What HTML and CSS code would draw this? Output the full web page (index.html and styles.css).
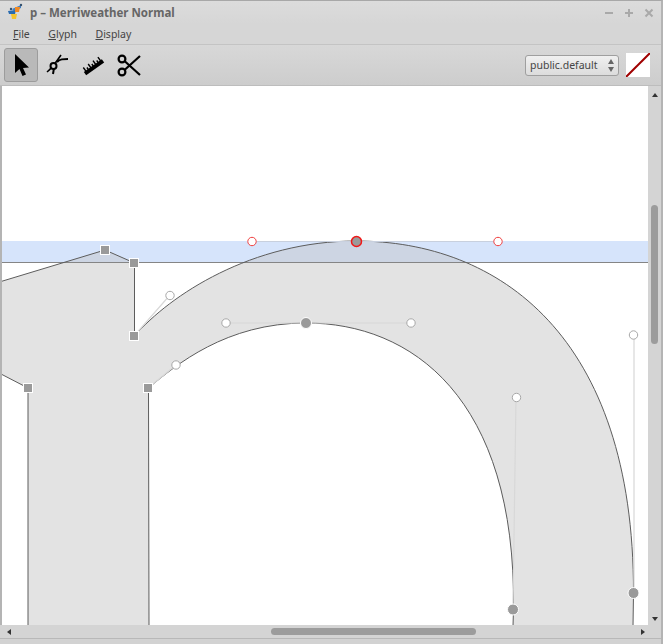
FILE: index.html
```html
<!DOCTYPE html>
<html lang="en">
<head>
  <meta charset="UTF-8" />
  <title>p – Merriweather Normal</title>
  <link rel="stylesheet" href="styles.css">
</head>
<body>

  <div class="window">
    <div class="titlebar">
      <svg class="app-icon" width="18" height="18" viewBox="0 0 18 18">
        <path d="M7 6 L16 2 L16 5 L9 8 Z" fill="#3f7fc4" />
        <path d="M3 8 L11 7 L10 11 L4 11 Z" fill="#2b6cb0" />
        <path d="M10 4 L15 4 L14 9 L10 9 Z" fill="#f08a24" />
        <path d="M6 11 L12 11 L11 16 L7 16 Z" fill="#f4c430" />
        <circle cx="6" cy="6" r="1.2" fill="#35506e" />
        <circle cx="16" cy="2" r="1.2" fill="#35506e" />
      </svg>
      <span class="title">p – Merriweather Normal</span>
      <div class="window-buttons">
        <svg width="10" height="10" viewBox="0 0 10 10"><path d="M1 5 H9" /></svg>
        <svg width="10" height="10" viewBox="0 0 10 10"><path d="M1 5 H9 M5 1 V9" /></svg>
        <svg width="10" height="10" viewBox="0 0 10 10"><path d="M1.5 1.5 L8.5 8.5 M8.5 1.5 L1.5 8.5" /></svg>
      </div>
    </div>

    <div class="menubar">
      <span class="menu"><u>F</u>ile</span>
      <span class="menu"><u>G</u>lyph</span>
      <span class="menu"><u>D</u>isplay</span>
    </div>

    <div class="toolbar">
      <button class="tool active">
        <svg width="24" height="26" viewBox="0 0 24 26"><path d="M6 2 L6 21 L10.5 17 L13.5 24 L17 22.5 L14 16 L20 15.5 Z" fill="#000" /></svg>
      </button>
      <button class="tool">
        <svg width="26" height="26" viewBox="0 0 26 26" fill="none" stroke="#000">
          <path d="M3 20 C8 16 13 9 17 3" stroke-width="1.6" />
          <path d="M13 10 C16 7 19 7 24 7" stroke-width="2" />
          <path d="M9 22 L10 16" stroke-width="2" />
          <circle cx="9.5" cy="14" r="3" stroke-width="2" fill="#d2d2d2" />
        </svg>
      </button>
      <button class="tool">
        <svg width="26" height="26" viewBox="0 0 26 26" fill="none" stroke="#000">
          <path d="M5 21.7 L23 8.8" stroke-width="4" />
          <path d="M6.8 20.4 L3.3 15.5 M9.2 18.7 L6.9 15.5 M11.7 16.9 L8.2 12 M14.1 15.2 L11.8 12 M16.5 13.5 L13 8.6 M19 11.7 L16.7 8.5 M21.4 10 L17.9 5.1" stroke-width="1.4" />
        </svg>
      </button>
      <button class="tool">
        <svg width="26" height="26" viewBox="0 0 26 26" fill="none" stroke="#000" stroke-width="2.2">
          <circle cx="6" cy="7" r="3.4" />
          <circle cx="6" cy="20" r="3.4" />
          <path d="M8.5 9 L24 23 M8.5 18 L24 4" />
        </svg>
      </button>
      <div class="toolbar-right">
        <div class="layer-select">
          <span>public.default</span>
          <div class="arrows"><i class="up"></i><i class="down"></i></div>
        </div>
        <svg class="swatch" width="24" height="24" viewBox="0 0 24 24">
          <rect width="24" height="24" fill="#fff" />
          <path d="M0 24 L24 0" stroke="#a00000" stroke-width="2" />
        </svg>
      </div>
    </div>

    <div class="editor">
      <div class="editor-row">
        <div class="canvas">
          <svg class="glyph" width="646" height="539" viewBox="2 86 646 539">
            <defs>
              <path id="glyph-p" d="M1 281.5 L105 250 L134.5 263 L134.5 336 C170 295 252 241 356 241 C498 241 634 335 633.5 593 L633 626 L513 626 L513.5 609 C516 397 411 323 306 323 C226 323 176 365 148.5 388 L149 626 L28 626 L28 388 L1 374 Z" />
              <clipPath id="zone-clip"><rect x="2" y="241" width="646" height="21" /></clipPath>
            </defs>
            <rect class="zone" x="2" y="241" width="646" height="22" />
            <use class="fill" href="#glyph-p" />
            <use class="fill-zone" href="#glyph-p" clip-path="url(#zone-clip)" />
            <line class="baseline" x1="2" y1="262.5" x2="648" y2="262.5" />
            <use class="outline" href="#glyph-p" />

            <path class="handle" d="M134 336 L170 295 M148 388 L176 365 M226 323 H411 M516 397 L513 609 M634 335 V593" />
            <path class="handle-sel" d="M252 241.5 H498" />

            <g class="off">
              <circle cx="170" cy="295.5" r="4.2" />
              <circle cx="176" cy="365" r="4.2" />
              <circle cx="226" cy="323" r="4.2" />
              <circle cx="411" cy="323" r="4.2" />
              <circle cx="516.5" cy="397.5" r="4.2" />
              <circle cx="633.5" cy="335" r="4.2" />
            </g>
            <g class="off-sel">
              <circle cx="252" cy="241.5" r="4.2" />
              <circle cx="498" cy="241.5" r="4.2" />
            </g>

            <g class="corner">
              <rect x="100.5" y="245.5" width="9" height="9" />
              <rect x="129.5" y="258.5" width="9" height="9" />
              <rect x="129.5" y="331.5" width="9" height="9" />
              <rect x="23.5" y="383.5" width="9" height="9" />
              <rect x="143.5" y="383.5" width="9" height="9" />
            </g>
            <g class="smooth">
              <circle cx="306" cy="323" r="5.5" />
              <circle cx="513" cy="609.5" r="5.5" />
              <circle cx="633.5" cy="593" r="5.5" />
            </g>
            <circle class="smooth-sel" cx="356.5" cy="241.5" r="5" />
          </svg>
        </div>
        <div class="vscroll">
          <i class="arrow-up"></i>
          <div class="vthumb"></div>
          <i class="arrow-down"></i>
        </div>
      </div>
      <div class="hscroll">
        <i class="arrow-left"></i>
        <div class="hthumb"></div>
        <i class="arrow-right"></i>
      </div>
    </div>
  </div>

</body>
</html>
```

FILE: styles.css
```css
body {
  margin: 0;
  font-family: "Noto Sans", "Open Sans", sans-serif;
  background: #d2d2d2;
  overflow: hidden;
}

.window {
  width: 663px;
  height: 644px;
  box-sizing: border-box;
  border-top: 1px solid #a8a8a8;
  border-right: 2px solid #b4b4b4;
  display: flex;
  flex-direction: column;
}

.titlebar {
  height: 23px;
  display: flex;
  align-items: center;
  padding: 0 7px 0 5px;
  background: linear-gradient(to bottom, #dcdcdc, #d6d6d6);
}

.app-icon {
  margin-right: 7px;
  margin-top: -2px;
}

.title {
  font-size: 11.5px;
  font-weight: bold;
  color: #666;
}

.window-buttons {
  margin-left: auto;
  display: flex;
  gap: 10px;
}

.window-buttons svg {
  fill: none;
  stroke: #a9a9a9;
  stroke-width: 2;
}

.menubar {
  height: 20px;
  display: flex;
  align-items: center;
  padding-left: 13px;
  gap: 18.5px;
  background: #d6d6d6;
  border-bottom: 1px solid #c4c4c4;
}

.menu {
  font-size: 10.5px;
  color: #444;
}

.toolbar {
  height: 40px;
  display: flex;
  align-items: center;
  padding: 0 11px 0 4px;
  gap: 2px;
  background: linear-gradient(to bottom, #d8d8d8, #cdcdcd);
}

.tool {
  width: 34px;
  height: 34px;
  padding: 0;
  display: flex;
  align-items: center;
  justify-content: center;
  background: none;
  border: 1px solid transparent;
  border-radius: 3px;
}

.tool.active {
  background: #b9b9b9;
  border-color: #9c9c9c;
}

.toolbar-right {
  margin-left: auto;
  display: flex;
  align-items: center;
  gap: 7px;
}

.layer-select {
  width: 94px;
  height: 21px;
  box-sizing: border-box;
  display: flex;
  align-items: center;
  justify-content: space-between;
  padding: 0 4px 0 4px;
  font-size: 10.5px;
  color: #444;
  background: linear-gradient(to bottom, #f0f0f0, #dcdcdc);
  border: 1px solid #9f9f9f;
  border-radius: 3px;
}

.arrows {
  display: flex;
  flex-direction: column;
  gap: 3px;
}

.arrows i {
  display: block;
  border-left: 3px solid transparent;
  border-right: 3px solid transparent;
}

.arrows .up {
  border-bottom: 5px solid #666;
}

.arrows .down {
  border-top: 5px solid #666;
}

.swatch {
  display: block;
}

.editor {
  flex: 1;
  display: flex;
  flex-direction: column;
  min-height: 0;
}

.editor-row {
  display: flex;
  height: 539px;
  padding-left: 2px;
  border-top: 1px solid #bdbdbd;
  background: linear-gradient(to right, #b4b4b4 2px, #d4d4d4 2px);
}

.canvas {
  width: 646px;
  height: 539px;
  background: #fff;
  overflow: hidden;
}

.glyph {
  display: block;
}

.zone {
  fill: #d6e4fb;
}

.baseline {
  stroke: #858585;
  stroke-width: 1;
}

.fill {
  fill: #e3e3e3;
}

.fill-zone {
  fill: #cdd5e3;
}

.outline {
  fill: none;
  stroke: #5c5c5c;
  stroke-width: 1;
}

.handle {
  fill: none;
  stroke: #d8d8d8;
  stroke-width: 1.2;
}

.handle-sel {
  fill: none;
  stroke: #c8d0de;
  stroke-width: 1.2;
}

.off circle {
  fill: #fff;
  stroke: #a8a8a8;
  stroke-width: 1;
}

.off-sel circle {
  fill: #fff;
  stroke: #f04040;
  stroke-width: 1;
}

.corner rect {
  fill: #9a9a9a;
  stroke: #fff;
  stroke-width: 1;
}

.smooth circle {
  fill: #9a9a9a;
  stroke: #fff;
  stroke-width: 1;
}

.smooth-sel {
  fill: #9a9a9a;
  stroke: #f01818;
  stroke-width: 1.5;
}

.vscroll {
  width: 13px;
  position: relative;
  display: flex;
  flex-direction: column;
  align-items: center;
  justify-content: space-between;
  padding: 7px 0 4px;
  box-sizing: border-box;
  background: #d4d4d4;
}

.vthumb {
  position: absolute;
  top: 119px;
  left: 3px;
  width: 7px;
  height: 139px;
  border-radius: 4px;
  background: #9c9c9c;
}

.hscroll {
  height: 13px;
  position: relative;
  display: flex;
  align-items: center;
  justify-content: space-between;
  padding: 0 16px 0 7px;
  background: #d4d4d4;
  border-bottom: 1px solid #b8b8b8;
}

.hthumb {
  position: absolute;
  left: 271px;
  top: 3px;
  width: 205px;
  height: 7px;
  border-radius: 4px;
  background: #9c9c9c;
}

.arrow-up,
.arrow-down,
.arrow-left,
.arrow-right {
  display: block;
  width: 0;
  height: 0;
  border-style: solid;
  border-color: transparent;
}

.arrow-up {
  border-width: 0 3px 4px;
  border-bottom-color: #333;
}

.arrow-down {
  border-width: 4px 3px 0;
  border-top-color: #333;
}

.arrow-left {
  border-width: 3px 4px 3px 0;
  border-right-color: #333;
}

.arrow-right {
  border-width: 3px 0 3px 4px;
  border-left-color: #333;
}
```
